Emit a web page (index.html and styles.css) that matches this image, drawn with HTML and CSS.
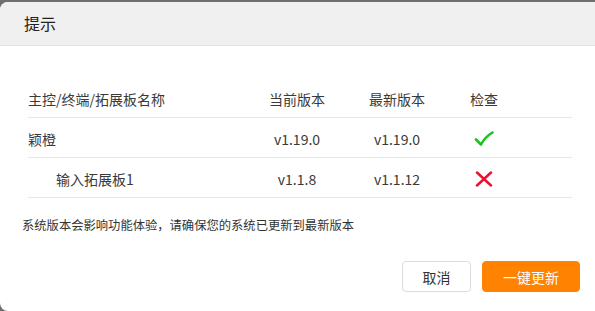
FILE: index.html
```html
<!DOCTYPE html>
<html>
  <head>
    <meta charset="utf-8">
    <link rel="stylesheet" href="styles.css">
  </head>
  <body>
    <div class="dialog">
      <div class="dialog-head">提示</div>
      <div class="dialog-body">
        <div class="ver-table">
          <div class="ver-row head">
            <div class="c-name">主控/终端/拓展板名称</div>
            <div class="c-mid">当前版本</div>
            <div class="c-mid">最新版本</div>
            <div class="c-mid">检查</div>
          </div>
          <div class="ver-row">
            <div class="c-name">颖橙</div>
            <div class="c-mid">v1.19.0</div>
            <div class="c-mid">v1.19.0</div>
            <div class="c-mid">
              <svg class="ico" width="20" height="16" viewBox="0 0 20 16">
                <path d="M2 8.5 L7 13.5 Q11 6 18.5 1.5" fill="none" stroke="#1fc21f" stroke-width="2.6" stroke-linecap="round" stroke-linejoin="round"/>
              </svg>
            </div>
          </div>
          <div class="ver-row">
            <div class="c-name sub">输入拓展板1</div>
            <div class="c-mid">v1.1.8</div>
            <div class="c-mid">v1.1.12</div>
            <div class="c-mid">
              <svg class="ico" width="18" height="16" viewBox="0 0 18 16">
                <path d="M2 1.5 L16 14.5 M16 1.5 L2 14.5" fill="none" stroke="#e8132e" stroke-width="2.5" stroke-linecap="round"/>
              </svg>
            </div>
          </div>
        </div>
        <p class="note">系统版本会影响功能体验，请确保您的系统已更新到最新版本</p>
      </div>
      <div class="dialog-foot">
        <button class="btn">取消</button>
        <button class="btn primary">一键更新</button>
      </div>
    </div>
  </body>
</html>
```

FILE: styles.css
```css
html, body {
  margin: 0;
  padding: 0;
  height: 100%;
  overflow: hidden;
  background-color: #6f6f6f;
  font-family: "Noto Sans CJK SC", "Noto Sans", sans-serif;
  color: #333;
}
.dialog {
  margin-top: 2px;
  width: 603px;
  height: 309px;
  background: #fff;
  border-radius: 8px;
  overflow: hidden;
  display: flex;
  flex-direction: column;
}
.dialog-head {
  height: 43px;
  line-height: 43px;
  padding-left: 24px;
  font-size: 16px;
  background: #f0f0f0;
  border-bottom: 1px solid #e2e2e2;
  color: #222;
}
.dialog-body {
  padding: 32px 31px 0 22px;
}
.ver-table {
  margin-left: 6px;
}
.ver-row {
  display: grid;
  grid-template-columns: 219px 100px 100px 74px 1fr;
  height: 37px;
  padding-top: 2px;
  align-items: center;
  border-bottom: 1px solid #e6e6e6;
  font-size: 14px;
  color: #3a3a3a;
}
.ver-row .c-mid {
  text-align: center;
}
.ver-row .sub {
  padding-left: 28px;
}
.ico {
  display: block;
  margin: 0 auto;
}
.note {
  margin: 18px 0 0;
  font-size: 12.3px;
  line-height: 18px;
}
.dialog-foot {
  margin-top: auto;
  display: flex;
  justify-content: flex-end;
  gap: 11px;
  padding: 0 23px 19px 0;
}
.btn {
  height: 31px;
  width: 69px;
  border: 1px solid #dcdcdc;
  border-radius: 4px;
  background: #fff;
  font-family: inherit;
  font-size: 14px;
  color: #333;
  padding: 0;
}
.btn.primary {
  width: 98px;
  border-color: #ff8200;
  background: #ff8200;
  color: #fff;
}
```
